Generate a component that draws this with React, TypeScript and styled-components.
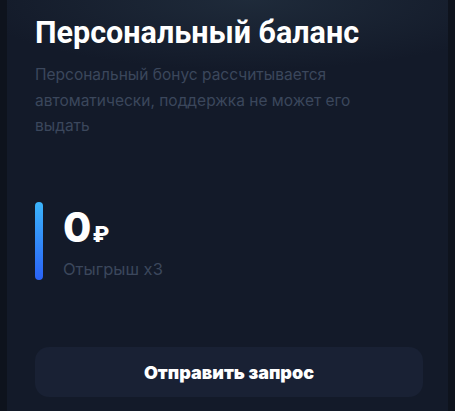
import styled, { createGlobalStyle } from 'styled-components';

const GlobalStyle = createGlobalStyle`
  html, body {
    margin: 0;
    padding: 0;
    background: #0e131d;
  }
  body {
    font-family: Inter, "Noto Sans", sans-serif;
  }
`;

const Page = styled.div`
  height: 411px;
  padding: 0 7px;
  box-sizing: border-box;
  overflow: hidden;
`;

const Card = styled.div`
  height: 100%;
  box-sizing: border-box;
  padding: 14px 25px 0 28px;
  display: flex;
  flex-direction: column;
  background:
    radial-gradient(ellipse 280px 70px at 55% 0%, rgba(40, 56, 72, 0.55), rgba(40, 56, 72, 0) 100%),
    #131a29;
`;

const Title = styled.h2`
  margin: 0;
  font-family: Roboto, Inter, sans-serif;
  font-size: 30.5px;
  line-height: 38px;
  font-weight: 700;
  color: #ffffff;
`;

const Description = styled.p`
  margin: 10px 0 0;
  font-size: 15.5px;
  line-height: 25.5px;
  color: #3b475c;
  max-width: 370px;
`;

const BalanceRow = styled.div`
  display: flex;
  align-items: stretch;
  gap: 20px;
  margin-top: 63px;
`;

const Accent = styled.div`
  width: 8px;
  height: 78px;
  border-radius: 4px;
  background: linear-gradient(180deg, #3bb4fb 0%, #2a62f6 100%);
`;

const BalanceInfo = styled.div`
  display: flex;
  flex-direction: column;
  padding-top: 2px;
`;

const Amount = styled.div`
  display: flex;
  align-items: baseline;
  font-size: 41px;
  line-height: 46px;
  font-weight: 800;
  color: #ffffff;
`;

const Currency = styled.span`
  font-size: 22px;
  font-weight: 800;
  margin-left: 1px;
`;

const Wager = styled.div`
  margin-top: 2px;
  font-size: 16.5px;
  line-height: 20px;
  color: #3b475c;
`;

const RequestButton = styled.button`
  margin-top: auto;
  margin-bottom: 14px;
  height: 50px;
  width: 100%;
  border: none;
  border-radius: 14px;
  background: #192134;
  color: #ffffff;
  font-family: Inter, "Noto Sans", sans-serif;
  font-size: 18px;
  font-weight: 900;
  cursor: pointer;
`;

export default function App() {
  return (
    <>
      <GlobalStyle />
      <Page>
        <Card>
          <Title>Персональный баланс</Title>
          <Description>
            Персональный бонус рассчитывается автоматически, поддержка не может
            его выдать
          </Description>
          <BalanceRow>
            <Accent />
            <BalanceInfo>
              <Amount>
                0<Currency>₽</Currency>
              </Amount>
              <Wager>Отыгрыш x3</Wager>
            </BalanceInfo>
          </BalanceRow>
          <RequestButton>Отправить запрос</RequestButton>
        </Card>
      </Page>
    </>
  );
}
